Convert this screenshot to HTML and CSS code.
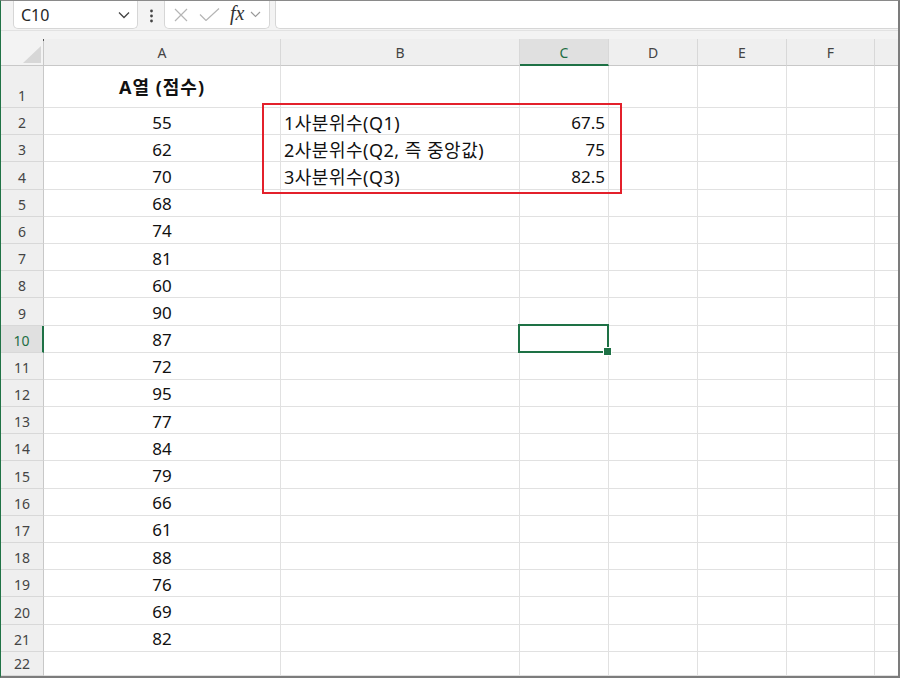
FILE: index.html
```html
<!DOCTYPE html>
<html lang="ko">
<head>
    <meta charset="UTF-8">
    <title>사분위수</title>
    <link rel="stylesheet" href="styles.css">
</head>
<body>
    <div class="window">
        <div class="formula-bar">
            <div class="name-box">
                <span>C10</span>
                <svg width="12" height="8" viewBox="0 0 12 8"><path d="M1 1.5l5 5 5-5" fill="none" stroke="#444" stroke-width="1.3"/></svg>
            </div>
            <svg class="grip" width="5" height="14" viewBox="0 0 5 14"><circle cx="2.5" cy="2" r="1.4"/><circle cx="2.5" cy="7" r="1.4"/><circle cx="2.5" cy="12" r="1.4"/></svg>
            <div class="fx-box">
                <svg width="14" height="14" viewBox="0 0 14 14"><path d="M1 1l12 12M13 1L1 13" fill="none" stroke="#b5b5b5" stroke-width="1.2"/></svg>
                <svg width="21" height="13" viewBox="0 0 21 13"><path d="M1 6.5l6 6L20 0.5" fill="none" stroke="#b5b5b5" stroke-width="1.2"/></svg>
                <span class="fx">fx</span>
                <svg width="11" height="7" viewBox="0 0 11 7"><path d="M1 1l4.5 4.5L10 1" fill="none" stroke="#999" stroke-width="1.1"/></svg>
            </div>
            <div class="formula-input"></div>
        </div>

        <div class="sheet">
            <div class="corner"><svg width="18" height="17" viewBox="0 0 18 17"><polygon points="18,0 18,17 0,17" fill="#d7d7d7"/></svg></div>
            <div class="ch">A</div><div class="ch">B</div><div class="ch on">C</div><div class="ch">D</div><div class="ch">E</div><div class="ch">F</div><div class="ch"></div>

            <div class="rh">1</div><div class="c mid bold">A열 (점수)</div><div class="c"></div><div class="c"></div><div class="c"></div><div class="c"></div><div class="c"></div><div class="c"></div>
            <div class="rh">2</div><div class="c mid">55</div><div class="c txt">1사분위수(Q1)</div><div class="c num">67.5</div><div class="c"></div><div class="c"></div><div class="c"></div><div class="c"></div>
            <div class="rh">3</div><div class="c mid">62</div><div class="c txt">2사분위수(Q2, 즉 중앙값)</div><div class="c num">75</div><div class="c"></div><div class="c"></div><div class="c"></div><div class="c"></div>
            <div class="rh">4</div><div class="c mid">70</div><div class="c txt">3사분위수(Q3)</div><div class="c num">82.5</div><div class="c"></div><div class="c"></div><div class="c"></div><div class="c"></div>
            <div class="rh">5</div><div class="c mid">68</div><div class="c"></div><div class="c"></div><div class="c"></div><div class="c"></div><div class="c"></div><div class="c"></div>
            <div class="rh">6</div><div class="c mid">74</div><div class="c"></div><div class="c"></div><div class="c"></div><div class="c"></div><div class="c"></div><div class="c"></div>
            <div class="rh">7</div><div class="c mid">81</div><div class="c"></div><div class="c"></div><div class="c"></div><div class="c"></div><div class="c"></div><div class="c"></div>
            <div class="rh">8</div><div class="c mid">60</div><div class="c"></div><div class="c"></div><div class="c"></div><div class="c"></div><div class="c"></div><div class="c"></div>
            <div class="rh">9</div><div class="c mid">90</div><div class="c"></div><div class="c"></div><div class="c"></div><div class="c"></div><div class="c"></div><div class="c"></div>
            <div class="rh on">10</div><div class="c mid">87</div><div class="c"></div><div class="c sel"></div><div class="c"></div><div class="c"></div><div class="c"></div><div class="c"></div>
            <div class="rh">11</div><div class="c mid">72</div><div class="c"></div><div class="c"></div><div class="c"></div><div class="c"></div><div class="c"></div><div class="c"></div>
            <div class="rh">12</div><div class="c mid">95</div><div class="c"></div><div class="c"></div><div class="c"></div><div class="c"></div><div class="c"></div><div class="c"></div>
            <div class="rh">13</div><div class="c mid">77</div><div class="c"></div><div class="c"></div><div class="c"></div><div class="c"></div><div class="c"></div><div class="c"></div>
            <div class="rh">14</div><div class="c mid">84</div><div class="c"></div><div class="c"></div><div class="c"></div><div class="c"></div><div class="c"></div><div class="c"></div>
            <div class="rh">15</div><div class="c mid">79</div><div class="c"></div><div class="c"></div><div class="c"></div><div class="c"></div><div class="c"></div><div class="c"></div>
            <div class="rh">16</div><div class="c mid">66</div><div class="c"></div><div class="c"></div><div class="c"></div><div class="c"></div><div class="c"></div><div class="c"></div>
            <div class="rh">17</div><div class="c mid">61</div><div class="c"></div><div class="c"></div><div class="c"></div><div class="c"></div><div class="c"></div><div class="c"></div>
            <div class="rh">18</div><div class="c mid">88</div><div class="c"></div><div class="c"></div><div class="c"></div><div class="c"></div><div class="c"></div><div class="c"></div>
            <div class="rh">19</div><div class="c mid">76</div><div class="c"></div><div class="c"></div><div class="c"></div><div class="c"></div><div class="c"></div><div class="c"></div>
            <div class="rh">20</div><div class="c mid">69</div><div class="c"></div><div class="c"></div><div class="c"></div><div class="c"></div><div class="c"></div><div class="c"></div>
            <div class="rh">21</div><div class="c mid">82</div><div class="c"></div><div class="c"></div><div class="c"></div><div class="c"></div><div class="c"></div><div class="c"></div>
            <div class="rh">22</div><div class="c mid"></div><div class="c"></div><div class="c"></div><div class="c"></div><div class="c"></div><div class="c"></div><div class="c"></div>

            <div class="callout"></div>
        </div>
    </div>
</body>
</html>
```

FILE: styles.css
```css
* {
    box-sizing: border-box;
}

body {
    margin: 0;
    background: #fff;
}

.window {
    width: 900px;
    height: 678px;
    display: flex;
    flex-direction: column;
    overflow: hidden;
    background: #f3f3f3;
    border-top: 1px solid #8a8a8a;
    border-left: 1px solid #217346;
    border-right: 2px solid #7c7c7c;
    border-bottom: 2px solid #7c7c7c;
    font-family: "Noto Sans", "Noto Sans CJK KR", sans-serif;
}

/* formula bar */
.formula-bar {
    height: 30px;
    flex: none;
    display: flex;
    align-items: flex-start;
    padding-left: 12px;
    border-bottom: 1px solid #e2e2e2;
}

.name-box {
    width: 125px;
    height: 28px;
    display: flex;
    align-items: center;
    justify-content: space-between;
    padding: 0 7px 0 7px;
    background: #fff;
    border: 1px solid #d6d6d6;
    border-top: none;
    border-radius: 0 0 5px 5px;
    font-size: 16px;
    color: #262626;
}

.grip {
    margin: 8px 0 0 11px;
    fill: #444;
}

.fx-box {
    width: 106px;
    height: 28px;
    margin-left: 10px;
    display: flex;
    align-items: center;
    padding-left: 9px;
    background: #fff;
    border: 1px solid #d6d6d6;
    border-top: none;
    border-radius: 0 0 5px 5px;
}

.fx-box svg:nth-of-type(2) {
    margin-left: 11px;
}

.fx {
    margin-left: 10px;
    margin-top: -3px;
    font-family: "Liberation Serif", "DejaVu Serif", serif;
    font-style: italic;
    font-size: 20px;
    line-height: 1;
    color: #333;
}

.fx-box svg:last-child {
    margin-left: 6px;
}

.formula-input {
    flex: 1;
    height: 28px;
    margin-left: 5px;
    background: #fff;
    border: 1px solid #d6d6d6;
    border-top: none;
    border-right: none;
    border-radius: 0 0 0 5px;
}

/* grid */
.sheet {
    flex: 1;
    position: relative;
    display: grid;
    grid-template-columns: 43px 237px 239px 89px 89px 89px 88px 1fr;
    grid-template-rows: 27px 42px repeat(20, 27.2px) 1fr;
    padding-top: 8px;
}

.corner {
    position: relative;
    display: flex;
    align-items: flex-end;
    justify-content: flex-end;
    padding: 0 2px 2px 0;
    border-right: 1px solid #c8c8c8;
    border-bottom: 1px solid #c8c8c8;
}

.corner::before {
    content: "";
    position: absolute;
    right: -1px;
    top: 0;
    width: 1px;
    height: 2px;
    background: #555;
}

.ch {
    display: flex;
    align-items: center;
    justify-content: center;
    padding-top: 1px;
    background: #efefef;
    border-right: 1px solid #d8d8d8;
    border-bottom: 1px solid #c8c8c8;
    font-size: 14px;
    color: #444;
}

.ch.on {
    background: #e0e0e0;
    border-bottom: 2px solid #1e7145;
    color: #1d6e44;
}

.rh {
    display: flex;
    align-items: flex-end;
    justify-content: center;
    padding-bottom: 2px;
    background: #efefef;
    border-right: 1px solid #c8c8c8;
    border-bottom: 1px solid #d8d8d8;
    font-size: 14px;
    color: #444;
}

.rh.on {
    background: #e0e0e0;
    border-right: 2px solid #1e7145;
    color: #1d6e44;
}

.c {
    display: flex;
    align-items: center;
    padding: 2px 3px 0 3px;
    background: #fff;
    border-right: 1px solid #e1e1e1;
    border-bottom: 1px solid #e1e1e1;
    font-size: 17px;
    color: #111;
    white-space: nowrap;
    min-width: 0;
}

.sheet > :nth-child(8n) {
    border-right: none;
}

.c.mid {
    justify-content: center;
}

.c.num {
    justify-content: flex-end;
}

.c.txt {
    font-size: 18px;
    letter-spacing: 0.5px;
}

.c.bold {
    padding: 0 3px 2px 3px;
    font-size: 18px;
    font-weight: bold;
    letter-spacing: 1px;
}

.c.sel {
    position: relative;
    z-index: 2;
}

.c.sel::before {
    content: "";
    position: absolute;
    top: -2px;
    left: -2px;
    right: -1px;
    bottom: -1px;
    border: 2px solid #1e7145;
}

.c.sel::after {
    content: "";
    position: absolute;
    right: -4px;
    bottom: -4px;
    width: 7px;
    height: 7px;
    background: #1e7145;
    border: 1px solid #fff;
}

/* red annotation box */
.callout {
    position: absolute;
    left: 261px;
    top: 72px;
    width: 360px;
    height: 91px;
    border: 2px solid #e3202b;
    z-index: 3;
}
```
